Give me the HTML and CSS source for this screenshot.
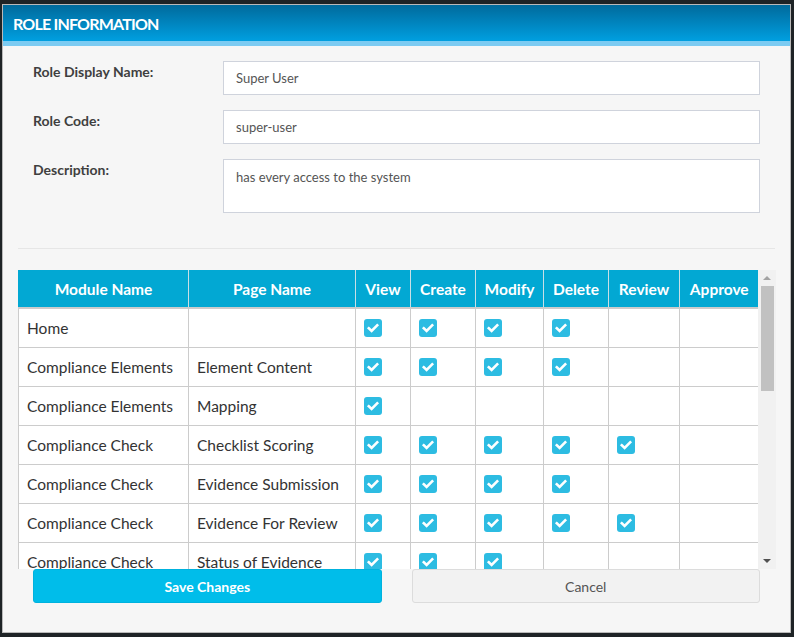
FILE: index.html
```html
<!DOCTYPE html>
<html lang="en">
<head>
<meta charset="utf-8">
<title>Role Information</title>
<link rel="stylesheet" href="styles.css">
</head>
<body>
<div class="modal">
  <div class="modal-header">
    <h2 class="modal-title">ROLE INFORMATION</h2>
  </div>
  <div class="modal-body">
    <div class="form">
      <div class="form-row">
        <label class="form-label">Role Display Name:</label>
        <div class="form-control">Super User</div>
      </div>
      <div class="form-row">
        <label class="form-label">Role Code:</label>
        <div class="form-control">super-user</div>
      </div>
      <div class="form-row">
        <label class="form-label">Description:</label>
        <div class="form-control textarea">has every access to the system</div>
      </div>
    </div>
    <hr class="divider">
    <div class="table-area">
      <div class="table-viewport">
        <table class="perm-table">
          <colgroup>
            <col class="c-module"><col class="c-page"><col class="c-view"><col class="c-create"><col class="c-modify"><col class="c-delete"><col class="c-review"><col class="c-approve">
          </colgroup>
          <thead>
            <tr><th>Module Name</th><th>Page Name</th><th>View</th><th>Create</th><th>Modify</th><th>Delete</th><th>Review</th><th>Approve</th></tr>
          </thead>
          <tbody id="rows"></tbody>
        </table>
      </div>
      <div class="scrollbar">
        <div class="sb-btn"><svg width="18" height="16" viewBox="0 0 18 16"><path d="M5 10h8L9 6z" fill="#a3a3a3"/></svg></div>
        <div class="sb-track"><div class="sb-thumb"></div></div>
        <div class="sb-btn"><svg width="18" height="16" viewBox="0 0 18 16"><path d="M5 6h8L9 10z" fill="#505050"/></svg></div>
      </div>
    </div>
    <div class="actions">
      <button class="btn btn-primary">Save Changes</button>
      <button class="btn btn-default">Cancel</button>
    </div>
  </div>
</div>
<script src="app.js"></script>
</body>
</html>
```
FILE: styles.css
```css
* { box-sizing: border-box; }
html, body { margin: 0; padding: 0; }
body {
  background: #1e2326;
  font-family: "Lato", "Open Sans", sans-serif;
  width: 794px;
  height: 637px;
  overflow: hidden;
  padding: 4px 3px 0 2px;
}
.modal {
  width: 789px;
  height: 629px;
  background: #f6f6f6;
  border: 1px solid #b9b9b9;
  display: flex;
  flex-direction: column;
}
.modal-header {
  height: 41px;
  background: linear-gradient(#006a9c, #009fe0);
  border-bottom: 5px solid #7ccbf2;
  display: flex;
  align-items: center;
  padding: 0 10px;
}
.modal-title {
  margin: 0;
  color: #fff;
  font-size: 16px;
  font-weight: 700;
  letter-spacing: -0.8px;
}
.modal-body {
  padding: 15px 15px 0 15px;
  display: flex;
  flex-direction: column;
}
.form {
  padding: 0 15px;
  display: flex;
  flex-direction: column;
  gap: 15px;
}
.form-row {
  display: flex;
}
.form-label {
  width: 190px;
  flex: none;
  font-size: 14px;
  font-weight: 700;
  color: #3f3f3f;
  padding-top: 2px;
}
.form-control {
  flex: 1;
  height: 34px;
  background: #fff;
  border: 1px solid #cfd3dc;
  padding: 0 12px;
  font-size: 13px;
  color: #555;
  display: flex;
  align-items: center;
}
.form-control.textarea {
  height: 54px;
  align-items: flex-start;
  padding-top: 9px;
}
.divider {
  margin: 35px 0 0 0;
  border: 0;
  border-top: 1px solid #e6e6e6;
  height: 0;
}
.table-area {
  margin-top: 21px;
  height: 299px;
  display: flex;
}
.table-viewport {
  width: 740px;
  height: 299px;
  overflow: hidden;
  flex: none;
}
.scrollbar {
  width: 18px;
  flex: none;
  background: #f1f1f1;
  display: flex;
  flex-direction: column;
}
.sb-btn { height: 16px; flex: none; }
.sb-btn svg { display: block; }
.sb-track {
  flex: 1;
  padding: 0 2px 0 3px;
}
.sb-thumb {
  height: 105px;
  background: #c1c1c1;
}
.perm-table {
  width: 740px;
  table-layout: fixed;
  border-collapse: collapse;
  background: #fff;
}
.c-module { width: 170px; }
.c-page { width: 167px; }
.c-view { width: 55px; }
.c-create { width: 65px; }
.c-modify { width: 68px; }
.c-delete { width: 65px; }
.c-review { width: 71px; }
.c-approve { width: 79px; }
.perm-table th {
  background: #02a8d3;
  color: #fff;
  font-size: 15.5px;
  font-weight: 700;
  height: 38px;
  padding: 0;
  text-align: center;
  border-left: 1px solid #c9dfe6;
  border-bottom: 2px solid #cccccc;
}
.perm-table th:first-child { border-left: 1px solid #02a8d3; }
.perm-table td {
  height: 39px;
  border: 1px solid #cccccc;
  padding: 0 8px;
  font-size: 15.5px;
  color: #333;
  white-space: nowrap;
  overflow: hidden;
}
.perm-table td.chk { padding: 0 0 0 8px; }
.check {
  display: block;
  width: 18px;
  height: 18px;
  border-radius: 3px;
  background: #2dbce2;
}
.check svg { display: block; }
.actions {
  display: flex;
  gap: 30px;
  padding: 0 15px;
}
.btn {
  flex: 1;
  height: 34px;
  border-radius: 3px;
  font-family: inherit;
  font-size: 14px;
  cursor: pointer;
}
.btn-primary {
  background: #00bdea;
  border: 1px solid #00b2de;
  color: #fff;
  font-weight: 700;
}
.btn-default {
  background: #f2f2f2;
  border: 1px solid #dcdcdc;
  color: #555;
}
```
FILE: app.js
```js
var rows = [
  ["Home", "", [1,1,1,1,0,0]],
  ["Compliance Elements", "Element Content", [1,1,1,1,0,0]],
  ["Compliance Elements", "Mapping", [1,0,0,0,0,0]],
  ["Compliance Check", "Checklist Scoring", [1,1,1,1,1,0]],
  ["Compliance Check", "Evidence Submission", [1,1,1,1,0,0]],
  ["Compliance Check", "Evidence For Review", [1,1,1,1,1,0]],
  ["Compliance Check", "Status of Evidence", [1,1,1,0,0,0]]
];
var check = '<span class="check"><svg width="18" height="18" viewBox="0 0 18 18"><path d="M4.8 9.3l2.8 2.6L13.2 6.3" fill="none" stroke="#fff" stroke-width="2.6" stroke-linecap="square"/></svg></span>';
var html = "";
rows.forEach(function (r) {
  html += "<tr><td>" + r[0] + "</td><td>" + r[1] + "</td>";
  r[2].forEach(function (v) {
    html += '<td class="chk">' + (v ? check : "") + "</td>";
  });
  html += "</tr>";
});
document.getElementById("rows").innerHTML = html;
```
